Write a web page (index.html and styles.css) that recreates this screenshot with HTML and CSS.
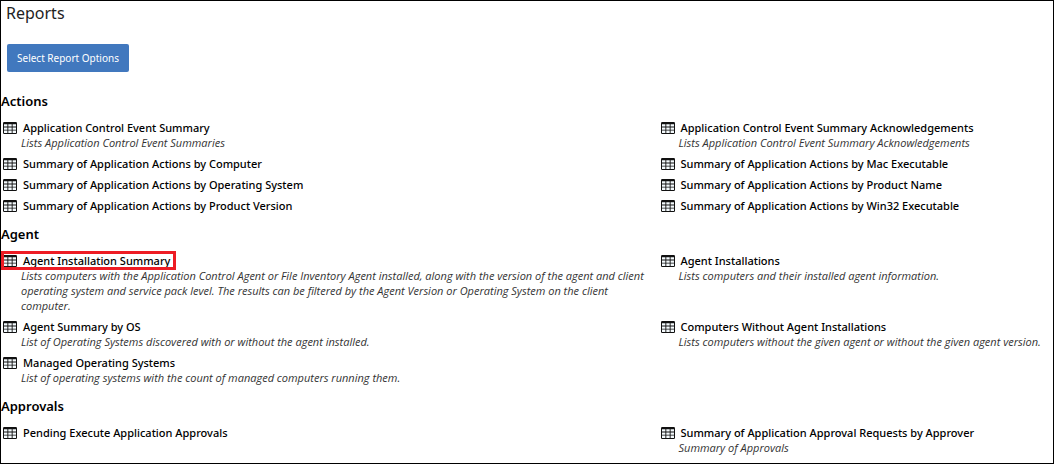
FILE: index.html
```
<!DOCTYPE html>
<html lang="en">
<head>
<meta charset="utf-8">
<title>Reports</title>
<link rel="stylesheet" href="styles.css">
</head>
<body>
<svg class="symbols">
  <symbol id="grid" viewBox="0 0 14 12">
    <rect width="14" height="12" rx="1.2" fill="currentColor"/>
    <path fill="#f4fafd" d="M1 2.2h3.4v2.3H1zM5.3 2.2h3.4v2.3H5.3zM9.6 2.2H13v2.3H9.6zM1 5.4h3.4v2.3H1zM5.3 5.4h3.4v2.3H5.3zM9.6 5.4H13v2.3H9.6zM1 8.6h3.4v2.3H1zM5.3 8.6h3.4v2.3H5.3zM9.6 8.6H13v2.3H9.6z"/>
  </symbol>
</svg>
<main class="page">
  <h1 class="page-title">Reports</h1>
  <button class="options-button" type="button">Select Report Options</button>

  <section class="group">
    <h2 class="group-title">Actions</h2>
    <ul class="reports">
      <li class="report"><a class="report-link" href="#"><svg class="icon"><use href="#grid"/></svg>Application Control Event Summary</a><p class="description">Lists Application Control Event Summaries</p></li>
      <li class="report"><a class="report-link" href="#"><svg class="icon"><use href="#grid"/></svg>Application Control Event Summary Acknowledgements</a><p class="description">Lists Application Control Event Summary Acknowledgements</p></li>
      <li class="report"><a class="report-link" href="#"><svg class="icon"><use href="#grid"/></svg>Summary of Application Actions by Computer</a></li>
      <li class="report"><a class="report-link" href="#"><svg class="icon"><use href="#grid"/></svg>Summary of Application Actions by Mac Executable</a></li>
      <li class="report"><a class="report-link" href="#"><svg class="icon"><use href="#grid"/></svg>Summary of Application Actions by Operating System</a></li>
      <li class="report"><a class="report-link" href="#"><svg class="icon"><use href="#grid"/></svg>Summary of Application Actions by Product Name</a></li>
      <li class="report"><a class="report-link" href="#"><svg class="icon"><use href="#grid"/></svg>Summary of Application Actions by Product Version</a></li>
      <li class="report"><a class="report-link" href="#"><svg class="icon"><use href="#grid"/></svg>Summary of Application Actions by Win32 Executable</a></li>
    </ul>
  </section>

  <section class="group">
    <h2 class="group-title">Agent</h2>
    <ul class="reports">
      <li class="report"><a class="report-link highlighted" href="#"><svg class="icon"><use href="#grid"/></svg>Agent Installation Summary</a><p class="description">Lists computers with the Application Control Agent or File Inventory Agent installed, along with the version of the agent and client operating system and service pack level. The results can be filtered by the Agent Version or Operating System on the client computer.</p></li>
      <li class="report"><a class="report-link" href="#"><svg class="icon"><use href="#grid"/></svg>Agent Installations</a><p class="description">Lists computers and their installed agent information.</p></li>
      <li class="report"><a class="report-link" href="#"><svg class="icon"><use href="#grid"/></svg>Agent Summary by OS</a><p class="description">List of Operating Systems discovered with or without the agent installed.</p></li>
      <li class="report"><a class="report-link" href="#"><svg class="icon"><use href="#grid"/></svg>Computers Without Agent Installations</a><p class="description">Lists computers without the given agent or without the given agent version.</p></li>
      <li class="report"><a class="report-link" href="#"><svg class="icon"><use href="#grid"/></svg>Managed Operating Systems</a><p class="description">List of operating systems with the count of managed computers running them.</p></li>
    </ul>
  </section>

  <section class="group">
    <h2 class="group-title">Approvals</h2>
    <ul class="reports">
      <li class="report"><a class="report-link" href="#"><svg class="icon"><use href="#grid"/></svg>Pending Execute Application Approvals</a></li>
      <li class="report"><a class="report-link" href="#"><svg class="icon"><use href="#grid"/></svg>Summary of Application Approval Requests by Approver</a><p class="description">Summary of Approvals</p></li>
    </ul>
  </section>
</main>
</body>
</html>
```

FILE: styles.css
```
* {
  box-sizing: border-box;
}

body {
  margin: 0;
  background: #fff;
  color: #111;
  font-family: "Noto Sans", "Open Sans", sans-serif;
  font-size: 11px;
}

.symbols {
  display: none;
}

.page {
  height: 100vh;
  overflow: hidden;
  border: 1px solid #000;
}

.page-title {
  margin: 0 0 19px 5px;
  color: #222;
  font-size: 16px;
  font-weight: 400;
  line-height: 24px;
}

.options-button {
  display: block;
  height: 28px;
  margin: 0 0 19px 6px;
  padding: 0 10px;
  border: 0;
  border-radius: 2px;
  background: #4178be;
  color: #fff;
  font-family: inherit;
  font-size: 10px;
}

.group {
  margin-bottom: 5px;
}

.group-title {
  margin: 0 0 9px;
  color: #000;
  font-size: 13px;
  font-weight: 600;
  line-height: 20px;
}

.reports {
  display: grid;
  grid-template-columns: 5fr 3fr;
  margin: 0;
  padding: 0;
  list-style: none;
}

.report {
  padding: 0 6px 6px 2px;
}

.report-link {
  display: flex;
  align-items: center;
  gap: 6px;
  width: fit-content;
  color: #000;
  font-weight: 500;
  line-height: 15px;
  text-decoration: none;
}

.icon {
  width: 14px;
  height: 12px;
  color: #111;
}

.highlighted {
  position: relative;
}

.highlighted::after {
  content: "";
  position: absolute;
  inset: -2px -6px -2px -2px;
  border: 3px solid #ed1c24;
}

.description {
  margin: 0 0 0 18px;
  color: #333;
  font-family: "Open Sans", sans-serif;
  font-style: italic;
  line-height: 15px;
}
```
